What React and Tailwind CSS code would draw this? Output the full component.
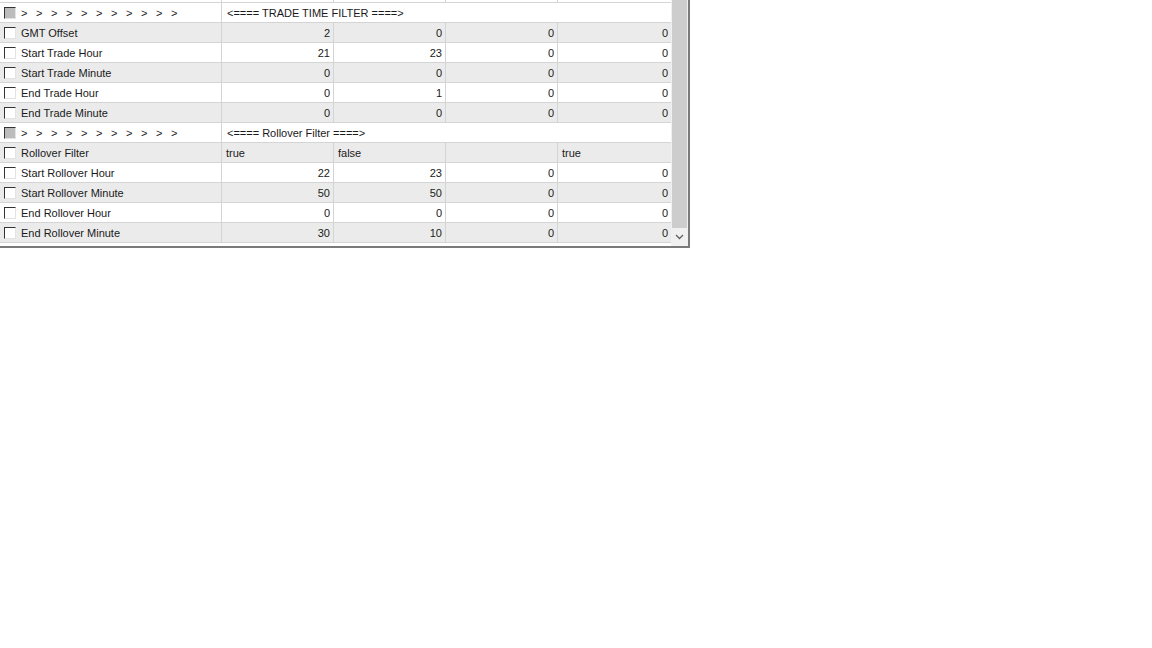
const rows = [
  { type: "sep", text: "<==== TRADE TIME FILTER ====>" },
  { name: "GMT Offset", vals: ["2", "0", "0", "0"] },
  { name: "Start Trade Hour", vals: ["21", "23", "0", "0"] },
  { name: "Start Trade Minute", vals: ["0", "0", "0", "0"] },
  { name: "End Trade Hour", vals: ["0", "1", "0", "0"] },
  { name: "End Trade Minute", vals: ["0", "0", "0", "0"] },
  { type: "sep", text: "<==== Rollover Filter ====>" },
  { name: "Rollover Filter", vals: ["true", "false", "", "true"], left: true },
  { name: "Start Rollover Hour", vals: ["22", "23", "0", "0"] },
  { name: "Start Rollover Minute", vals: ["50", "50", "0", "0"] },
  { name: "End Rollover Hour", vals: ["0", "0", "0", "0"] },
  { name: "End Rollover Minute", vals: ["30", "10", "0", "0"] },
];

const colWidths = ["w-[222px]", "w-[112px]", "w-[112px]", "w-[112px]", "w-[113px]"];

function Check({ filled }) {
  return (
    <span
      className={`inline-block w-[12px] h-[12px] border-t border-l border-[#333] border-b border-r border-b-[#e3e3e3] border-r-[#e3e3e3] shrink-0 ${
        filled ? "bg-[#bcbcbc]" : "bg-white"
      }`}
    />
  );
}

function Arrows() {
  return (
    <div className="flex ml-[5px] pt-px">
      {Array.from({ length: 11 }).map((_, i) => (
        <span key={i} className="w-[15px]">&gt;</span>
      ))}
    </div>
  );
}

function Row({ row, idx }) {
  if (row.type === "sep") {
    return (
      <div className="flex h-[20px] bg-white border-b border-[#d4d4d4]">
        <div className="w-[222px] flex items-center pl-[4px] border-r border-[#d4d4d4]">
          <Check filled />
          <Arrows />
        </div>
        <div className="flex-1 flex items-center pl-[5px] pt-px">{row.text}</div>
      </div>
    );
  }
  const gray = idx % 2 === 1;
  return (
    <div className={`flex h-[20px] border-b border-[#d4d4d4] ${gray ? "bg-[#ebebeb]" : "bg-white"}`}>
      <div className="w-[222px] flex items-center pl-[4px] border-r border-[#d4d4d4]">
        <Check />
        <span className="ml-[5px] pt-px">{row.name}</span>
      </div>
      {row.vals.map((v, i) => (
        <div
          key={i}
          className={`${colWidths[i + 1]} flex items-center pt-px ${
            row.left ? "justify-start pl-[4px]" : "justify-end pr-[3px]"
          } ${i < 3 ? "border-r border-[#d4d4d4]" : ""}`}
        >
          {v}
        </div>
      ))}
    </div>
  );
}

export default function App() {
  let n = 0;
  return (
    <div className="w-[1152px] h-[648px] bg-white font-['Liberation_Sans',Arial,sans-serif] text-[11px] text-[#1a1a1a]">
      <div className="w-[690px] h-[248px] flex border-r-2 border-b-2 border-[#7a7a7a]">
        <div className="w-[671px] flex flex-col">
          {/* row scrolled partly out of view */}
          <div className="flex h-[3px] border-b border-[#d4d4d4]">
            {colWidths.slice(0, 4).map((w, i) => (
              <div key={i} className={`${w} border-r border-[#d4d4d4]`} />
            ))}
          </div>
          {rows.map((r, i) => {
            if (r.type !== "sep") n += 1;
            else n = 0;
            return <Row key={i} row={r} idx={n} />;
          })}
        </div>
        <div className="w-[17px] flex flex-col bg-[#f0f0f0]">
          <div className="h-[228px] mx-[1px] bg-[#cdcdcd]" />
          <div className="flex-1 flex items-center justify-center">
            <svg width="9" height="6" viewBox="0 0 9 6">
              <path d="M1 1 L4.5 4.5 L8 1" stroke="#606060" strokeWidth="1.3" fill="none" />
            </svg>
          </div>
        </div>
      </div>
    </div>
  );
}
